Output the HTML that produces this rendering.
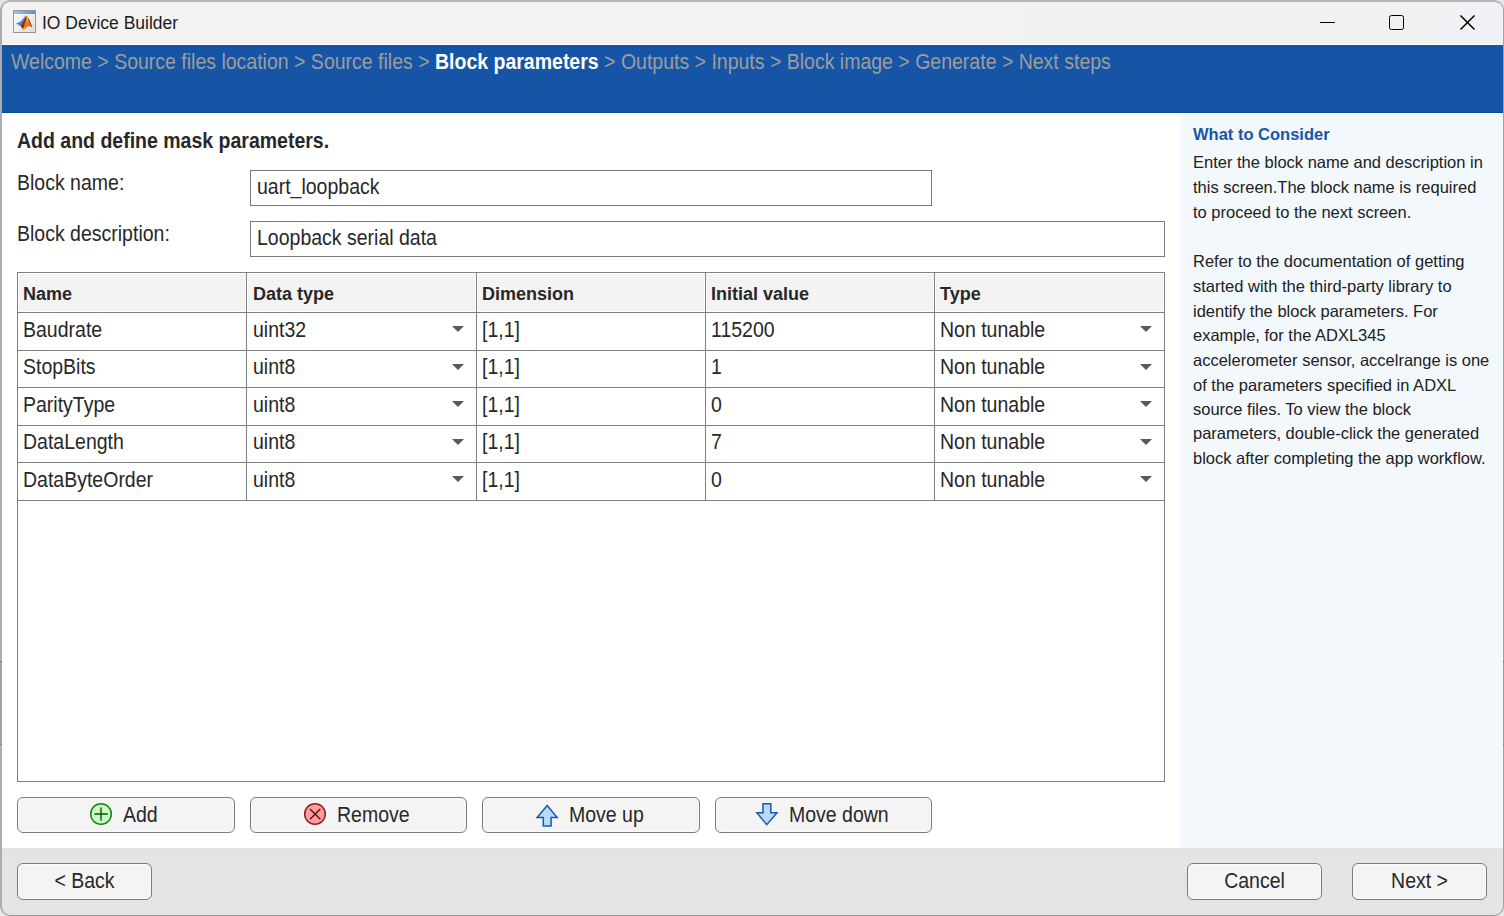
<!DOCTYPE html>
<html><head><meta charset="utf-8">
<style>
*{margin:0;padding:0;box-sizing:border-box}
html,body{width:1504px;height:916px;overflow:hidden;background:#e6e6e6;font-family:"Liberation Sans",sans-serif;color:#282828}
.a{position:absolute;white-space:nowrap;line-height:1}
#win{position:absolute;left:0;top:0;width:1504px;height:916px;border-radius:10px;overflow:hidden;background:#fff}
#frame{position:absolute;left:0;top:0;width:1504px;height:916px;border-radius:10px;border:2px solid #adadad;border-top-color:#b4b4b4;border-right:1px solid #a0a0a0;border-bottom:1px solid #999;pointer-events:none;z-index:10}
#title{position:absolute;left:0;top:0;width:1504px;height:44px;background:linear-gradient(90deg,#f3f2f0,#f0f1f4)}
#crumb{position:absolute;left:0;top:44px;width:1504px;height:69px;background:#1655a5;border-top:1px solid #fdfdfd;border-bottom:1px solid #0a4a9f}
#panel{position:absolute;left:1180px;top:114px;width:324px;height:734px;background:#f3f8fd}
#footer{position:absolute;left:0;top:848px;width:1504px;height:68px;background:#e4e4e4;border-top:1px solid #e0e0e0}
.t19{font-size:19.5px;transform:scaleY(1.1);transform-origin:0 16.5px}
.inp{position:absolute;border:1px solid #7a7a7a;background:#fff}
.btn{position:absolute;border:1px solid #7a7a7a;border-radius:6px;background:#f4f4f4;box-shadow:inset 0 0 0 1px #fbfbfb}
.hl{position:absolute;background:#808080}
.hd{position:absolute;background:#f3f3f3;border:1px solid #fff}
.dd{position:absolute;width:0;height:0;border-left:6px solid transparent;border-right:6px solid transparent;border-top:6px solid #595959}
.p{position:absolute;left:1193px;font-size:16.5px;line-height:1;white-space:nowrap;color:#212121}
</style></head><body>
<div id="win">
  <div id="title">
    <svg class="a" style="left:13px;top:10px" width="23" height="23" viewBox="0 0 23 23">
      <defs><linearGradient id="ig" x1="0" y1="0" x2="1" y2="1"><stop offset="0" stop-color="#fff"/><stop offset="1" stop-color="#dcdcdc"/></linearGradient>
      <linearGradient id="tb" x1="0" y1="0" x2="1" y2="0"><stop offset="0" stop-color="#9cc4ee"/><stop offset="1" stop-color="#4f92dc"/></linearGradient></defs>
      <rect x="0.5" y="0.5" width="22" height="22" fill="url(#ig)" stroke="#969696"/>
      <rect x="1" y="1" width="21" height="3" fill="url(#tb)"/>
      <path d="M3.2,13.6 L8,11.5 L11.8,6.8 L13.6,5.5 L15.5,8.5 L18.9,17.2 L17.5,16.5 L14.8,16.3 L10.4,20.4 L9,18 L7.7,16 Z" fill="#e8761c"/>
      <path d="M3.2,13.6 L8,11.5 L11.8,6.8 L12.6,7.6 L10,12 L7.7,16 Z" fill="#3d8fe0"/>
      <path d="M12.6,7.6 L13.6,5.5 L14,8.5 L11.5,14 L10.6,19.5 L9,18 L7.7,16 L10,12 Z" fill="#9a2412"/>
      <path d="M13.6,5.5 L15,7.5 L15.2,11.5 L13.4,12.5 L13.5,8 Z" fill="#f6bb22"/>
      <path d="M10.4,20.4 L12.2,18.2 L11.2,16.8 L9.6,18.6 Z" fill="#f5b21e"/>
      <path d="M15.3,8.5 L18.9,17.2" stroke="#a8321a" stroke-width="1"/>
    </svg>
    <div class="a" style="left:42px;top:15px;font-size:17.5px;color:#1c1c1c">IO Device Builder</div>
    <div class="a" style="left:1320px;top:22px;width:15px;height:1.3px;background:#000"></div>
    <div class="a" style="left:1389px;top:15px;width:15px;height:15px;border:1.6px solid #000;border-radius:2.5px"></div>
    <svg class="a" style="left:1459px;top:14px" width="17" height="17" viewBox="0 0 17 17"><path d="M1.5,1.5 L15.5,15.5 M15.5,1.5 L1.5,15.5" stroke="#000" stroke-width="1.5" fill="none"/></svg>
  </div>
  <div id="crumb"></div>
  <div class="a t19" style="left:11px;top:52.5px;color:#9d9d9d">Welcome &gt; Source files location &gt; Source files &gt; <b style="color:#fff">Block parameters</b> &gt; Outputs &gt; Inputs &gt; Block image &gt; Generate &gt; Next steps</div>

  <div class="a t19" style="left:17px;top:131.5px;font-weight:bold">Add and define mask parameters.</div>
  <div class="a t19" style="left:17px;top:173.7px">Block name:</div>
  <div class="inp" style="left:250px;top:170px;width:682px;height:36px"></div>
  <div class="a t19" style="left:257px;top:178.1px">uart_loopback</div>
  <div class="a t19" style="left:17px;top:225px">Block description:</div>
  <div class="inp" style="left:250px;top:221px;width:915px;height:36px"></div>
  <div class="a t19" style="left:257px;top:229.3px">Loopback serial data</div>

  <!-- table -->
  <div class="a" style="left:17px;top:272px;width:1148px;height:510px;border:1px solid #808080;background:#fff"></div>
  <div class="hd" style="left:18px;top:273px;width:228px;height:39px"></div>
  <div class="hd" style="left:247px;top:273px;width:229px;height:39px"></div>
  <div class="hd" style="left:477px;top:273px;width:228px;height:39px"></div>
  <div class="hd" style="left:706px;top:273px;width:228px;height:39px"></div>
  <div class="hd" style="left:935px;top:273px;width:229px;height:39px"></div>
  <div class="hl" style="left:17px;top:312px;width:1148px;height:1px"></div>
  <div class="hl" style="left:17px;top:350px;width:1148px;height:1px"></div>
  <div class="hl" style="left:17px;top:387px;width:1148px;height:1px"></div>
  <div class="hl" style="left:17px;top:425px;width:1148px;height:1px"></div>
  <div class="hl" style="left:17px;top:462px;width:1148px;height:1px"></div>
  <div class="hl" style="left:17px;top:500px;width:1148px;height:1px"></div>
  <div class="hl" style="left:246px;top:272px;width:1px;height:229px"></div>
  <div class="hl" style="left:476px;top:272px;width:1px;height:229px"></div>
  <div class="hl" style="left:705px;top:272px;width:1px;height:229px"></div>
  <div class="hl" style="left:934px;top:272px;width:1px;height:229px"></div>

  <div class="a" style="left:23px;top:284.8px;font-size:18px;font-weight:bold">Name</div>
  <div class="a" style="left:253px;top:284.8px;font-size:18px;font-weight:bold">Data type</div>
  <div class="a" style="left:482px;top:284.8px;font-size:18px;font-weight:bold">Dimension</div>
  <div class="a" style="left:711px;top:284.8px;font-size:18px;font-weight:bold">Initial value</div>
  <div class="a" style="left:940px;top:284.8px;font-size:18px;font-weight:bold">Type</div>

  <div class="a t19" style="left:23px;top:321.3px">Baudrate</div>
  <div class="a t19" style="left:253px;top:321.3px">uint32</div>
  <div class="a t19" style="left:482px;top:321.3px">[1,1]</div>
  <div class="a t19" style="left:711px;top:321.3px">115200</div>
  <div class="a t19" style="left:940px;top:321.3px">Non tunable</div>
  <div class="dd" style="left:452px;top:326px"></div>
  <div class="dd" style="left:1140px;top:326px"></div>
  <div class="a t19" style="left:23px;top:358.3px">StopBits</div>
  <div class="a t19" style="left:253px;top:358.3px">uint8</div>
  <div class="a t19" style="left:482px;top:358.3px">[1,1]</div>
  <div class="a t19" style="left:711px;top:358.3px">1</div>
  <div class="a t19" style="left:940px;top:358.3px">Non tunable</div>
  <div class="dd" style="left:452px;top:364px"></div>
  <div class="dd" style="left:1140px;top:364px"></div>
  <div class="a t19" style="left:23px;top:396.3px">ParityType</div>
  <div class="a t19" style="left:253px;top:396.3px">uint8</div>
  <div class="a t19" style="left:482px;top:396.3px">[1,1]</div>
  <div class="a t19" style="left:711px;top:396.3px">0</div>
  <div class="a t19" style="left:940px;top:396.3px">Non tunable</div>
  <div class="dd" style="left:452px;top:401px"></div>
  <div class="dd" style="left:1140px;top:401px"></div>
  <div class="a t19" style="left:23px;top:433.3px">DataLength</div>
  <div class="a t19" style="left:253px;top:433.3px">uint8</div>
  <div class="a t19" style="left:482px;top:433.3px">[1,1]</div>
  <div class="a t19" style="left:711px;top:433.3px">7</div>
  <div class="a t19" style="left:940px;top:433.3px">Non tunable</div>
  <div class="dd" style="left:452px;top:439px"></div>
  <div class="dd" style="left:1140px;top:439px"></div>
  <div class="a t19" style="left:23px;top:471.3px">DataByteOrder</div>
  <div class="a t19" style="left:253px;top:471.3px">uint8</div>
  <div class="a t19" style="left:482px;top:471.3px">[1,1]</div>
  <div class="a t19" style="left:711px;top:471.3px">0</div>
  <div class="a t19" style="left:940px;top:471.3px">Non tunable</div>
  <div class="dd" style="left:452px;top:476px"></div>
  <div class="dd" style="left:1140px;top:476px"></div>

  <!-- buttons -->
  <div class="btn" style="left:17px;top:797px;width:218px;height:36px"></div>
  <div class="btn" style="left:250px;top:797px;width:217px;height:36px"></div>
  <div class="btn" style="left:482px;top:797px;width:218px;height:36px"></div>
  <div class="btn" style="left:715px;top:797px;width:217px;height:36px"></div>
  <svg class="a" style="left:88px;top:801px" width="26" height="26" viewBox="0 0 26 26">
    <circle cx="13" cy="13" r="10.3" fill="#cbfcc3" stroke="#0f870f" stroke-width="1.5"/>
    <path d="M6.5,13 H19.8 M13,6.5 V19.8" stroke="#0a520a" stroke-width="1.4"/>
  </svg>
  <div class="a t19" style="left:123px;top:806.2px">Add</div>
  <svg class="a" style="left:302px;top:801px" width="26" height="26" viewBox="0 0 26 26">
    <circle cx="13" cy="13" r="10.3" fill="#ff9d9d" stroke="#8e1f1f" stroke-width="1.5"/>
    <path d="M8,8 L18.3,18.3 M18.3,8 L8,18.3" stroke="#5c0d0d" stroke-width="1.4"/>
  </svg>
  <div class="a t19" style="left:337px;top:806.2px">Remove</div>
  <svg class="a" style="left:534px;top:803px" width="26" height="26" viewBox="0 0 26 26">
    <path d="M13.2,2.4 L23.1,14.4 L17.1,14.4 L17.1,23.1 L9.3,23.1 L9.3,14.4 L3.1,14.4 Z" fill="#b5dbff" stroke="#1d5aa6" stroke-width="1.5" stroke-linejoin="miter"/>
  </svg>
  <div class="a t19" style="left:569px;top:806.2px">Move up</div>
  <svg class="a" style="left:754px;top:801px" width="26" height="26" viewBox="0 0 26 26">
    <path d="M9,2.7 L16.8,2.7 L16.8,11.8 L23,11.8 L12.8,23.7 L2.9,11.8 L9,11.8 Z" fill="#b5dbff" stroke="#1d5aa6" stroke-width="1.5" stroke-linejoin="miter"/>
  </svg>
  <div class="a t19" style="left:789px;top:806.2px">Move down</div>

  <div id="panel"></div>
  <div class="a" style="left:1193px;top:126px;font-size:16.5px;font-weight:bold;color:#1a56a6">What to Consider</div>
  <div class="p" style="top:153.8px">Enter the block name and description in</div>
  <div class="p" style="top:178.8px">this screen.The block name is required</div>
  <div class="p" style="top:203.8px">to proceed to the next screen.</div>
  <div class="p" style="top:252.8px">Refer to the documentation of getting</div>
  <div class="p" style="top:277.8px">started with the third-party library to</div>
  <div class="p" style="top:302.8px">identify the block parameters. For</div>
  <div class="p" style="top:326.8px">example, for the ADXL345</div>
  <div class="p" style="top:351.8px">accelerometer sensor, accelrange is one</div>
  <div class="p" style="top:376.8px">of the parameters specified in ADXL</div>
  <div class="p" style="top:401.3px">source files. To view the block</div>
  <div class="p" style="top:425.3px">parameters, double-click the generated</div>
  <div class="p" style="top:450.3px">block after completing the app workflow.</div>

  <div id="footer"></div>
  <div class="btn" style="left:17px;top:863px;width:135px;height:37px"></div>
  <div class="btn" style="left:1187px;top:863px;width:135px;height:37px"></div>
  <div class="btn" style="left:1352px;top:863px;width:135px;height:37px"></div>
  <div class="a t19" style="left:17px;width:135px;text-align:center;top:872.2px">&lt; Back</div>
  <div class="a t19" style="left:1187px;width:135px;text-align:center;top:872.2px">Cancel</div>
  <div class="a t19" style="left:1352px;width:135px;text-align:center;top:872.2px">Next &gt;</div>
</div>
<div id="frame"></div>
<div class="a" style="left:0;top:661px;width:2px;height:84px;background:#a2a2a2;border-top:1px solid #777;border-bottom:1px solid #888;z-index:11"></div>
<div class="a" style="left:1503px;top:661px;width:1px;height:84px;background:#9a9a9a;border-top:1px solid #666;border-bottom:1px solid #777;z-index:11"></div>
</body></html>
